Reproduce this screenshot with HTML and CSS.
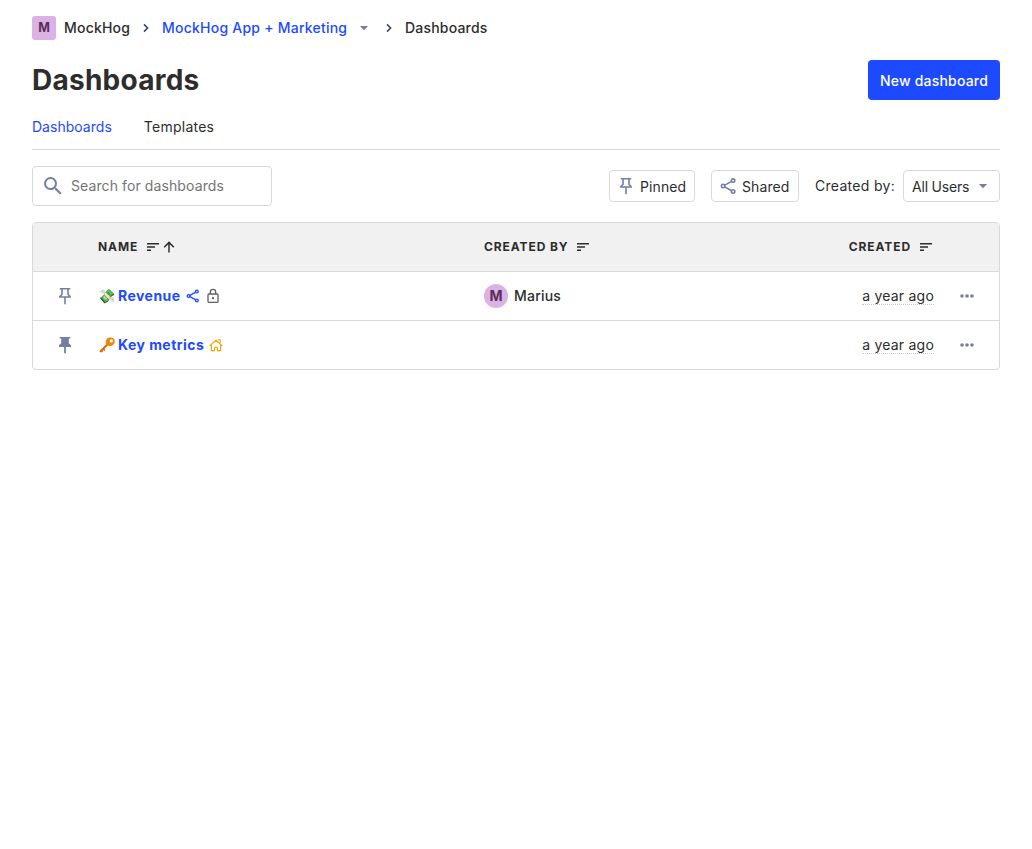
FILE: index.html
```html
<!DOCTYPE html>
<html lang="en">
<head>
<meta charset="utf-8">
<title>Dashboards</title>
<link rel="stylesheet" href="styles.css">
</head>
<body>
<svg class="sprite" aria-hidden="true">
  <symbol id="chevron" viewBox="0 0 16 16"><path d="M6 4.4L9.6 8 6 11.6" fill="none" stroke="currentColor" stroke-width="1.5"/></symbol>
  <symbol id="caret" viewBox="0 0 16 16"><path d="M3.9 6h8.2L8 10.2z" fill="currentColor"/></symbol>
  <symbol id="search" viewBox="0 0 24 24"><path fill="currentColor" d="M15.5 14h-.79l-.28-.27A6.47 6.47 0 0 0 16 9.5 6.5 6.5 0 1 0 9.5 16c1.61 0 3.09-.59 4.23-1.57l.27.28v.79l5 4.99L20.49 19l-4.99-5zm-6 0a4.5 4.5 0 1 1 0-9 4.5 4.5 0 0 1 0 9z"/></symbol>
  <symbol id="pin" viewBox="0 0 18 18"><path d="M3.8 1.7h10.4M6 2v5.4L3.9 9.5v.5h10.2v-.5L12 7.4V2M9 10v7.2" fill="none" stroke="currentColor" stroke-width="1.6"/></symbol>
  <symbol id="pin-filled" viewBox="0 0 18 18"><path d="M3.7.9h10.6v1.7h-1.5v4.6L15 9.2v1.7H9.9v6.3H8.1v-6.3H3V9.2l2.2-2V2.6H3.7z" fill="currentColor"/></symbol>
  <symbol id="share" viewBox="0 0 18 18"><path d="M5 8.1l6.9-3.7M5 9.9l6.9 3.8" stroke="currentColor" stroke-width="1.7"/><g fill="none" stroke="currentColor" stroke-width="1.7"><circle cx="3.3" cy="9" r="1.8"/><circle cx="13.9" cy="3.2" r="1.8"/><circle cx="13.9" cy="14.8" r="1.8"/></g></symbol>
  <symbol id="lock" viewBox="0 0 16 16"><g fill="none" stroke="currentColor" stroke-width="1.3"><rect x="3" y="6" width="10" height="8.4" rx="1"/><path d="M5.3 6V4a2.7 2.7 0 0 1 5.4 0v2"/></g><circle cx="8" cy="10.2" r="1.1" fill="currentColor"/></symbol>
  <symbol id="home" viewBox="0 0 16 16"><path d="M1.7 8.9L8 3.3l6.3 5.6M3.4 7.6v6h3.2v-3.4h2.8v3.4h3.2v-6M9.6 2.7h2.6v3" fill="none" stroke="currentColor" stroke-width="1.15" stroke-linejoin="round"/></symbol>
  <symbol id="sort" viewBox="0 0 14 14"><path d="M1 3h12v1.4H1zM1 6.3h8v1.4H1zM1 9.6h4V11H1z" fill="currentColor"/></symbol>
  <symbol id="up" viewBox="0 0 14 14"><path d="M7 12.5V2.6M2.2 7.2L7 2.4l4.8 4.8" fill="none" stroke="currentColor" stroke-width="1.5"/></symbol>
  <symbol id="more" viewBox="0 0 16 16"><g fill="currentColor"><circle cx="3" cy="8" r="1.8"/><circle cx="8" cy="8" r="1.8"/><circle cx="13" cy="8" r="1.8"/></g></symbol>
  <symbol id="key" viewBox="0 0 16 16"><path d="M9.2 6.8L1.6 14.3" stroke="#df6c0b" stroke-width="2.2" stroke-linecap="round"/><path d="M4.2 12l1.7 1.6M2.3 13.8l1.2 1.2" stroke="#df6c0b" stroke-width="1.5"/><path fill="#e88908" fill-rule="evenodd" d="M8.2 1.4C9.4.3 12.2.1 13.8.9c2 .9 2.4 3.6 1.5 5.6-.8 1.8-3.5 3-5.7 2.6C7.5 8.700 6.400 6.800 6.700 4.600c.1-1.300.6-2.400 1.500-3.200zM12.300 2.300a1.600 1.600 0 1 0 0 3.200 1.600 1.600 0 0 0 0-3.200z"/></symbol>
</svg>
<main class="page">
  <nav class="crumbs">
    <span class="avatar">M</span><span class="org">MockHog</span>
    <svg class="sep"><use href="#chevron"/></svg>
    <a class="link project">MockHog App + Marketing</a>
    <svg class="caret crumb-caret"><use href="#caret"/></svg>
    <svg class="sep"><use href="#chevron"/></svg>
    <span class="here">Dashboards</span>
  </nav>
  <header class="title-bar">
    <h1>Dashboards</h1>
    <button class="primary">New dashboard</button>
  </header>
  <div class="tabs"><a class="tab active">Dashboards</a><a class="tab">Templates</a></div>
  <div class="toolbar">
    <label class="search"><svg><use href="#search"/></svg><input type="text" placeholder="Search for dashboards"></label>
    <div class="filters">
      <button class="filter pinned"><svg><use href="#pin"/></svg><span>Pinned</span></button>
      <button class="filter shared"><svg><use href="#share"/></svg><span>Shared</span></button>
      <span class="label">Created by:</span>
      <button class="filter users"><span>All Users</span><svg class="caret"><use href="#caret"/></svg></button>
    </div>
  </div>
  <section class="table">
    <div class="row head">
      <span></span>
      <div class="cell"><span>NAME</span><svg class="sort"><use href="#sort"/></svg><svg class="up"><use href="#up"/></svg></div>
      <div class="cell"><span>CREATED BY</span><svg class="sort"><use href="#sort"/></svg></div>
      <div class="cell end"><span>CREATED</span><svg class="sort"><use href="#sort"/></svg></div>
      <span></span>
    </div>
    <div class="row">
      <svg class="pin"><use href="#pin"/></svg>
      <div class="cell"><a class="name"><span class="emoji">💸</span>Revenue</a><svg class="mark share-mark"><use href="#share"/></svg><svg class="mark lock-mark"><use href="#lock"/></svg></div>
      <div class="cell"><span class="avatar round">M</span><span class="person">Marius</span></div>
      <div class="cell end"><span class="ago">a year ago</span></div>
      <svg class="more"><use href="#more"/></svg>
    </div>
    <div class="row">
      <svg class="pin"><use href="#pin-filled"/></svg>
      <div class="cell"><a class="name"><svg class="key"><use href="#key"/></svg>Key metrics</a><svg class="mark home-mark"><use href="#home"/></svg></div>
      <div class="cell"></div>
      <div class="cell end"><span class="ago">a year ago</span></div>
      <svg class="more"><use href="#more"/></svg>
    </div>
  </section>
</main>
</body>
</html>
```
FILE: styles.css
```css
* { box-sizing: border-box; }
body { margin: 0; background: #fff; color: #2d2d2d; font: 14px/20px Inter, "Noto Color Emoji", sans-serif; }
.sprite { position: absolute; width: 0; height: 0; }
svg { display: block; flex: none; }
button { font: inherit; color: inherit; margin: 0; }
.page { padding: 16px 32px; }
.crumbs { display: flex; align-items: center; height: 24px; font-weight: 500; letter-spacing: .2px; white-space: nowrap; }
.avatar { display: flex; align-items: center; justify-content: center; width: 24px; height: 24px; border-radius: 3px; background: #dcb1e3; color: #572e5e; font-size: 12.5px; font-weight: 700; letter-spacing: 0; flex: none; }
.org { width: 66px; margin-left: 8px; }
.sep { width: 16px; height: 16px; margin: 0 8px; color: #35416b; }
.link { color: #1d4aff; }
.project { width: 185px; letter-spacing: .23px; }
.caret { width: 16px; height: 16px; color: #747ea2; }
.crumb-caret { margin-left: 9px; margin-right: 1px; }
.title-bar { display: flex; justify-content: space-between; align-items: center; margin-top: 20px; height: 40px; }
h1 { margin: 0; font-size: 28px; line-height: 40px; font-weight: 700; letter-spacing: .25px; }
.primary { width: 132px; height: 40px; padding: 2px 0 0; border: 0; border-radius: 4px; background: #1d4aff; color: #fff; font-weight: 500; letter-spacing: .2px; }
.tabs { display: flex; gap: 32px; height: 50px; padding-top: 17px; border-bottom: 1px solid #d9d9d9; }
.tab { letter-spacing: .25px; }
.tab.active { color: #1d4aff; letter-spacing: .02px; }
.toolbar { display: flex; justify-content: space-between; align-items: center; height: 40px; margin: 16px 0; }
.search { display: flex; align-items: center; width: 240px; height: 40px; padding: 0 8px; border: 1px solid #d9d9d9; border-radius: 4px; }
.search svg { width: 24px; height: 24px; color: #747ea2; }
.search input { width: 180px; margin-left: 6px; padding: 0; border: 0; outline: 0; font: inherit; letter-spacing: .1px; background: none; }
.search input::placeholder { color: #757575; }
.filters { display: flex; align-items: center; }
.filter { display: flex; align-items: center; height: 32px; padding: 0 8px; background: #fff; border: 1px solid #d9d9d9; border-radius: 4px; letter-spacing: .1px; white-space: nowrap; }
.filter span { padding-top: 1px; }
.filter svg { color: #747ea2; }
.pinned { width: 86px; }
.shared { width: 88px; margin-left: 16px; }
.pinned svg, .shared svg { width: 18px; height: 18px; margin: 0 4px 0 -1px; }
.pinned svg { margin-right: 5px; }
.shared svg { width: 17px; margin-left: 0; margin-right: 5px; }
.label { width: 80px; margin: 0 8px 0 16px; letter-spacing: .3px; white-space: nowrap; }
.users { width: 97px; justify-content: space-between; letter-spacing: -.2px; }
.table { border: 1px solid #d9d9d9; border-radius: 4px; overflow: hidden; }
.row { display: grid; grid-template-columns: 65px 386px 305px 145px 65px; height: 49px; align-items: center; border-top: 1px solid #d9d9d9; }
.row:first-child { height: 48px; border-top: 0; }
.head { background: #f1f1f1; font-size: 12px; font-weight: 700; letter-spacing: .9px; }
.cell { display: flex; align-items: center; white-space: nowrap; }
.end { justify-content: flex-end; }
.sort { width: 14px; height: 14px; margin-left: 8px; }
.end .sort { margin-right: 1px; }
.up { width: 14px; height: 14px; margin-left: 2px; }
.pin { width: 18px; height: 18px; margin-left: 23px; color: #747ea2; }
.name { display: flex; align-items: center; font-weight: 700; letter-spacing: .45px; color: #1d4aff; }
.emoji { width: 20px; letter-spacing: 0; }
.key { width: 16px; height: 16px; margin: 0 3.5px 0 .5px; }
.mark { width: 14px; height: 14px; }
.share-mark { margin-left: 5px; color: #1d4aff; }
.lock-mark { width: 16px; height: 16px; margin-left: 5px; color: #5f5f5f; }
.home-mark { width: 16px; height: 16px; margin-left: 4px; color: #f7a501; }
.round { border-radius: 50%; font-size: 14px; }
.person { margin-left: 6px; font-weight: 500; letter-spacing: .2px; }
.ago { border-bottom: 1px dotted #c8c8c8; line-height: 17px; letter-spacing: .22px; }
.more { width: 16px; height: 16px; margin-left: 25px; color: #747ea2; }
```
